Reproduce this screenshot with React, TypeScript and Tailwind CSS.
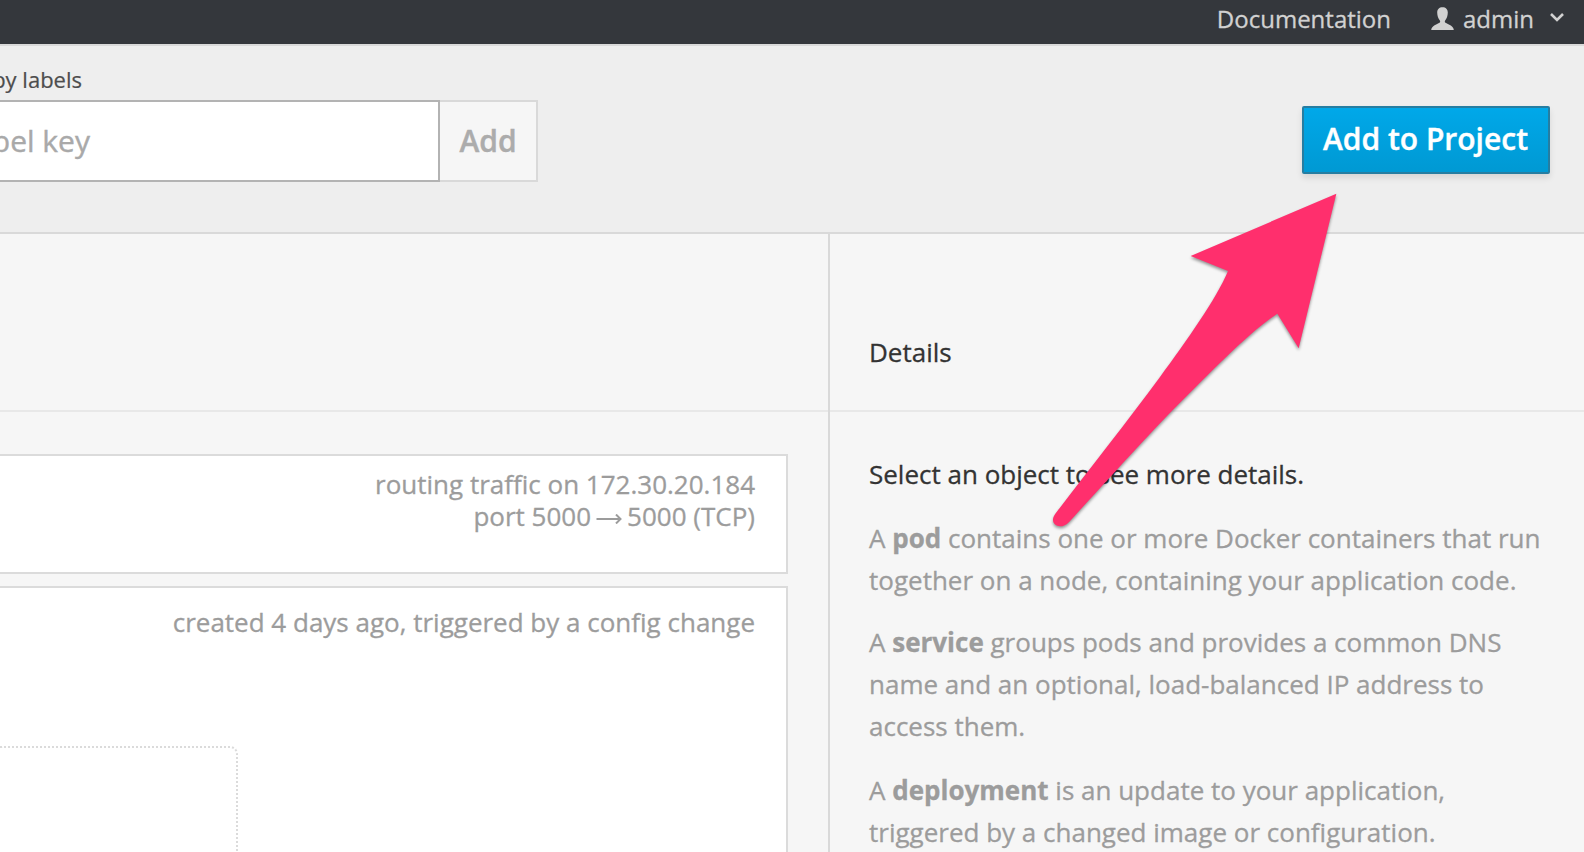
function UserIcon() {
  return (
    <svg className="mt-[7px] h-[23px] w-[23px] shrink-0" viewBox="0 0 23 23" fill="#d1d1d1">
      <path d="M11.5 0.2c3.300 0 5.300 1.900 5.300 5.400 0 3.200-1.100 6.200-2.500 7.700-.7.8-.7 1.900.2 2.500 1.100.8 3.500 1.500 5.300 2.700 1.800 1.200 2.700 2.500 3 4.400H.200c.3-1.900 1.200-3.200 3-4.400 1.800-1.200 4.200-1.900 5.300-2.700.9-.6.9-1.700.2-2.500-1.400-1.500-2.500-4.500-2.500-7.700C6.200 2.100 8.200.2 11.500.2z" />
    </svg>
  );
}

function TopBar() {
  return (
    <header className="flex h-[46px] shrink-0 items-start justify-end border-b-2 border-[#d9d9d9] bg-[#34373c] pr-5 text-[24px] leading-[36px] text-[#d1d1d1]">
      <span className="mt-px mr-[40px] [-webkit-text-stroke:0.3px]">Documentation</span>
      <UserIcon />
      <span className="mt-px ml-[9px] [-webkit-text-stroke:0.3px]">admin</span>
      <svg className="mt-[12px] ml-4 h-[11px] w-[14px] shrink-0" viewBox="0 0 14 11" fill="none" stroke="#d1d1d1" strokeWidth="2.600">
        <path d="M1 2l6 6 6-6" />
      </svg>
    </header>
  );
}

function Toolbar() {
  return (
    <section className="flex h-[188px] shrink-0 items-start justify-between border-b-2 border-[#d9d9d9] bg-[#eeeeee] pr-[34px]">
      <div>
        <div className="-ml-[82px] flex h-[54px] w-[164px] items-start justify-end pt-[17px] text-[22px] leading-[32px] whitespace-nowrap text-[#4d4d4d] [-webkit-text-stroke:0.2px]">
          Filter by labels
        </div>
        <div className="flex">
          <div className="flex h-[82px] w-[440px] items-center overflow-hidden border-y-2 border-r-2 border-[#b3b3b3] bg-white pb-[2px] text-[30px] text-[#a9a9a9] [-webkit-text-stroke:0.4px]">
            <span className="flex w-[90px] shrink-0 justify-end whitespace-nowrap">Label key</span>
          </div>
          <div className="flex h-[82px] w-[98px] items-center justify-center border-y-2 border-r-2 border-[#d9d9d9] bg-[#f6f6f6] pb-[2px] text-[30px] font-semibold text-[#acacac] [-webkit-text-stroke:0.4px]">
            Add
          </div>
        </div>
      </div>
      <button className="mt-[60px] flex h-[68px] w-[248px] items-center justify-center rounded-[2px] border-2 border-[#267da1] bg-linear-to-b from-[#00a8e9] to-[#0099d3] pr-px pb-[4px] text-[30px] font-semibold whitespace-nowrap text-white shadow-[0_4px_6px_rgba(3,3,3,0.1)] [-webkit-text-stroke:0.4px]">
        Add to Project
      </button>
    </section>
  );
}

function Overview() {
  return (
    <div className="flex w-[828px] shrink-0 flex-col">
      <div className="h-[178px] shrink-0 border-b-2 border-[#e8e8e8]" />
      <div className="flex grow flex-col pt-[42px] pr-10 text-right text-[26px] leading-[32px] text-[#9c9c9c] [-webkit-text-stroke:0.3px]">
        <div className="h-[120px] shrink-0 border-y-2 border-r-2 border-[#dbdbdb] bg-white pt-3 pr-[31px]">
          <div>routing traffic on 172.30.20.184</div>
          <div className="flex items-center justify-end">
            port 5000
            <svg className="mr-[5px] ml-[5px] mt-[6px] h-[10px] w-[26px]" viewBox="0 0 26 10" fill="none" stroke="#9c9c9c" strokeWidth="2">
              <path d="M0.500 5H25M20 0.500L24.500 5L20 9.500" />
            </svg>
            5000 (TCP)
          </div>
        </div>
        <div className="mt-3 h-[300px] shrink-0 border-y-2 border-r-2 border-[#dbdbdb] bg-white pt-[18px]">
          <div className="pr-[31px]">created 4 days ago, triggered by a config change</div>
          <div className="mt-[108px] h-[180px] w-[238px] rounded-tr-[8px] border-t-2 border-r-2 border-dotted border-[#dbdbdb]" />
        </div>
      </div>
    </div>
  );
}

function Details() {
  return (
    <aside className="flex grow flex-col border-l-2 border-[#d9d9d9] text-[26px] leading-[42px] [-webkit-text-stroke:0.3px]">
      <div className="h-[178px] shrink-0 border-b-2 border-[#e8e8e8] pt-[97px] pl-[39px] text-[#333]">Details</div>
      <div className="pt-[41px] pl-[39px] whitespace-nowrap text-[#9c9c9c]">
        <p className="text-[#333]">Select an object to see more details.</p>
        <p className="mt-[22px]">
          A <b>pod</b> contains one or more Docker containers that run
          <br />
          together on a node, containing your application code.
        </p>
        <p className="mt-5">
          A <b>service</b> groups pods and provides a common DNS
          <br />
          name and an optional, load-balanced IP address to
          <br />
          access them.
        </p>
        <p className="mt-[22px]">
          A <b>deployment</b> is an update to your application,
          <br />
          triggered by a changed image or configuration.
        </p>
      </div>
    </aside>
  );
}

function PointerArrow() {
  return (
    <svg
      className="pointer-events-none absolute top-[180px] left-[1030px] h-[360px] w-[330px] drop-shadow-[0_2px_1.500px_rgba(0,0,0,0.4)]"
      viewBox="0 0 990 1080"
      fill="#ff2f6d"
    >
      <path d="M919 41L482 228L594 273C560 355 470 482 390 591C290 727 180 865 76 1001C60 1023 74 1039 90 1039C100 1039 108 1035 118 1025C220 915 350 768 450 668C560 558 660 455 742 401L806 505Z" />
    </svg>
  );
}

export default function App() {
  return (
    <div className="relative flex h-[852px] w-[1584px] flex-col overflow-hidden bg-[#f6f6f6] font-['Open_Sans','Noto_Sans',sans-serif]">
      <TopBar />
      <Toolbar />
      <main className="flex min-h-0 grow overflow-hidden">
        <Overview />
        <Details />
      </main>
      <PointerArrow />
    </div>
  );
}
